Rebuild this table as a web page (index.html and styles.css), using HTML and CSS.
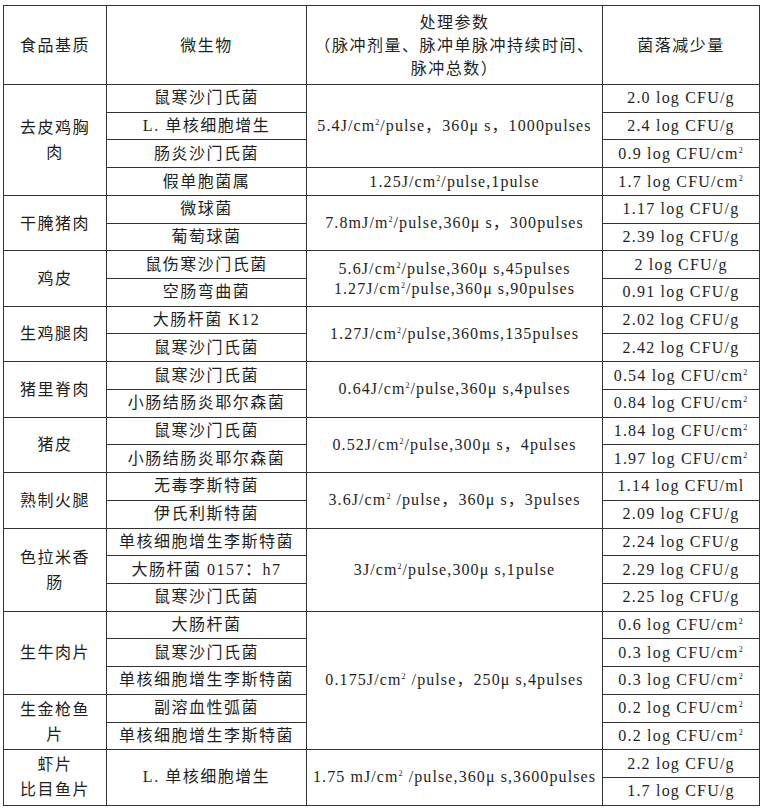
FILE: index.html
```html
<!DOCTYPE html>
<html lang="zh-CN">
<head>
<meta charset="utf-8">
<title>脉冲强光处理参数</title>
<link rel="stylesheet" href="styles.css">
</head>
<body>
<div class="page">
<table class="data">
<colgroup>
<col class="c1"><col class="c2"><col class="c3"><col class="c4">
</colgroup>
<thead>
<tr class="head">
<th class="cjk">食品基质</th>
<th class="cjk">微生物</th>
<th class="cjk">处理参数<br>（脉冲剂量、脉冲单脉冲持续时间、<br>脉冲总数）</th>
<th class="cjk">菌落减少量</th>
</tr>
</thead>
<tbody>
<tr>
<td class="cjk food" rowspan="4">去皮鸡胸<br>肉</td>
<td class="cjk">鼠寒沙门氏菌</td>
<td class="param" rowspan="3">5.4J/cm<span class="sq">2</span>/pulse，360<span class="mu">μ</span>s，1000pulses</td>
<td class="val">2.0 log CFU/g</td>
</tr>
<tr>
<td class="cjk">L. 单核细胞增生</td>
<td class="val">2.4 log CFU/g</td>
</tr>
<tr>
<td class="cjk">肠炎沙门氏菌</td>
<td class="val">0.9 log CFU/cm<span class="sq">2</span></td>
</tr>
<tr>
<td class="cjk">假单胞菌属</td>
<td class="param">1.25J/cm<span class="sq">2</span>/pulse,1pulse</td>
<td class="val">1.7 log CFU/cm<span class="sq">2</span></td>
</tr>

<tr>
<td class="cjk food" rowspan="2">干腌猪肉</td>
<td class="cjk">微球菌</td>
<td class="param" rowspan="2">7.8mJ/m<span class="sq">2</span>/pulse,360<span class="mu">μ</span>s，300pulses</td>
<td class="val">1.17 log CFU/g</td>
</tr>
<tr>
<td class="cjk">葡萄球菌</td>
<td class="val">2.39 log CFU/g</td>
</tr>

<tr>
<td class="cjk food" rowspan="2">鸡皮</td>
<td class="cjk">鼠伤寒沙门氏菌</td>
<td class="param two" rowspan="2">5.6J/cm<span class="sq">2</span>/pulse,360<span class="mu">μ</span>s,45pulses<br>1.27J/cm<span class="sq">2</span>/pulse,360<span class="mu">μ</span>s,90pulses</td>
<td class="val">2 log CFU/g</td>
</tr>
<tr>
<td class="cjk">空肠弯曲菌</td>
<td class="val">0.91 log CFU/g</td>
</tr>

<tr>
<td class="cjk food" rowspan="2">生鸡腿肉</td>
<td class="cjk">大肠杆菌 K12</td>
<td class="param" rowspan="2">1.27J/cm<span class="sq">2</span>/pulse,360ms,135pulses</td>
<td class="val">2.02 log CFU/g</td>
</tr>
<tr>
<td class="cjk">鼠寒沙门氏菌</td>
<td class="val">2.42 log CFU/g</td>
</tr>

<tr>
<td class="cjk food" rowspan="2">猪里脊肉</td>
<td class="cjk">鼠寒沙门氏菌</td>
<td class="param" rowspan="2">0.64J/cm<span class="sq">2</span>/pulse,360<span class="mu">μ</span>s,4pulses</td>
<td class="val">0.54 log CFU/cm<span class="sq">2</span></td>
</tr>
<tr>
<td class="cjk">小肠结肠炎耶尔森菌</td>
<td class="val">0.84 log CFU/cm<span class="sq">2</span></td>
</tr>

<tr>
<td class="cjk food" rowspan="2">猪皮</td>
<td class="cjk">鼠寒沙门氏菌</td>
<td class="param" rowspan="2">0.52J/cm<span class="sq">2</span>/pulse,300<span class="mu">μ</span>s，4pulses</td>
<td class="val">1.84 log CFU/cm<span class="sq">2</span></td>
</tr>
<tr>
<td class="cjk">小肠结肠炎耶尔森菌</td>
<td class="val">1.97 log CFU/cm<span class="sq">2</span></td>
</tr>

<tr>
<td class="cjk food" rowspan="2">熟制火腿</td>
<td class="cjk">无毒李斯特菌</td>
<td class="param" rowspan="2">3.6J/cm<span class="sq">2</span> /pulse，360<span class="mu">μ</span>s，3pulses</td>
<td class="val">1.14 log CFU/ml</td>
</tr>
<tr>
<td class="cjk">伊氏利斯特菌</td>
<td class="val">2.09 log CFU/g</td>
</tr>

<tr>
<td class="cjk food" rowspan="3">色拉米香<br>肠</td>
<td class="cjk">单核细胞增生李斯特菌</td>
<td class="param" rowspan="3">3J/cm<span class="sq">2</span>/pulse,300<span class="mu">μ</span>s,1pulse</td>
<td class="val">2.24 log CFU/g</td>
</tr>
<tr>
<td class="cjk">大肠杆菌 0157：h7</td>
<td class="val">2.29 log CFU/g</td>
</tr>
<tr>
<td class="cjk">鼠寒沙门氏菌</td>
<td class="val">2.25 log CFU/g</td>
</tr>

<tr>
<td class="cjk food" rowspan="3">生牛肉片</td>
<td class="cjk">大肠杆菌</td>
<td class="param" rowspan="5">0.175J/cm<span class="sq">2</span> /pulse，250<span class="mu">μ</span>s,4pulses</td>
<td class="val">0.6 log CFU/cm<span class="sq">2</span></td>
</tr>
<tr>
<td class="cjk">鼠寒沙门氏菌</td>
<td class="val">0.3 log CFU/cm<span class="sq">2</span></td>
</tr>
<tr>
<td class="cjk">单核细胞增生李斯特菌</td>
<td class="val">0.3 log CFU/cm<span class="sq">2</span></td>
</tr>
<tr>
<td class="cjk food" rowspan="2">生金枪鱼<br>片</td>
<td class="cjk">副溶血性弧菌</td>
<td class="val">0.2 log CFU/cm<span class="sq">2</span></td>
</tr>
<tr>
<td class="cjk">单核细胞增生李斯特菌</td>
<td class="val">0.2 log CFU/cm<span class="sq">2</span></td>
</tr>

<tr>
<td class="cjk food" rowspan="2">虾片<br>比目鱼片</td>
<td class="cjk" rowspan="2">L. 单核细胞增生</td>
<td class="param" rowspan="2">1.75 mJ/cm<span class="sq">2</span> /pulse,360<span class="mu">μ</span>s,3600pulses</td>
<td class="val">2.2 log CFU/g</td>
</tr>
<tr>
<td class="val">1.7 log CFU/g</td>
</tr>
</tbody>
</table>
</div>
</body>
</html>
```

FILE: styles.css
```css
html, body {
  margin: 0;
  padding: 0;
  background: #ffffff;
}

.page {
  padding: 5px 0 0 3px;
}

.data {
  border-collapse: collapse;
  table-layout: fixed;
  width: 756px;
  font-family: "Liberation Serif", "Noto Sans CJK SC", serif;
  font-size: 16px;
  color: #1e1e1e;
}

.c1 { width: 103px; }
.c2 { width: 200px; }
.c3 { width: 296px; }
.c4 { width: 157px; }

.data th,
.data td {
  border: 1px solid #333333;
  padding: 0 2px;
  text-align: center;
  vertical-align: middle;
  font-weight: normal;
  white-space: nowrap;
  overflow: hidden;
}

.data tr {
  height: 27.73px;
}

.data tr.head {
  height: 79px;
}

.head th {
  line-height: 23px;
}

.cjk {
  letter-spacing: 1.5px;
  line-height: 20px;
}

.food {
  line-height: 25px;
}

.param {
  letter-spacing: 1.1px;
  line-height: 20px;
}

.param.two {
  line-height: 20px;
}

.mu {
  display: inline-block;
  padding-right: 5px;
}

.sq {
  font-size: 8px;
  line-height: 0;
  vertical-align: 6px;
  letter-spacing: 0;
  padding-right: 1px;
}

.val {
  line-height: 20px;
  letter-spacing: 1.2px;
}
```
